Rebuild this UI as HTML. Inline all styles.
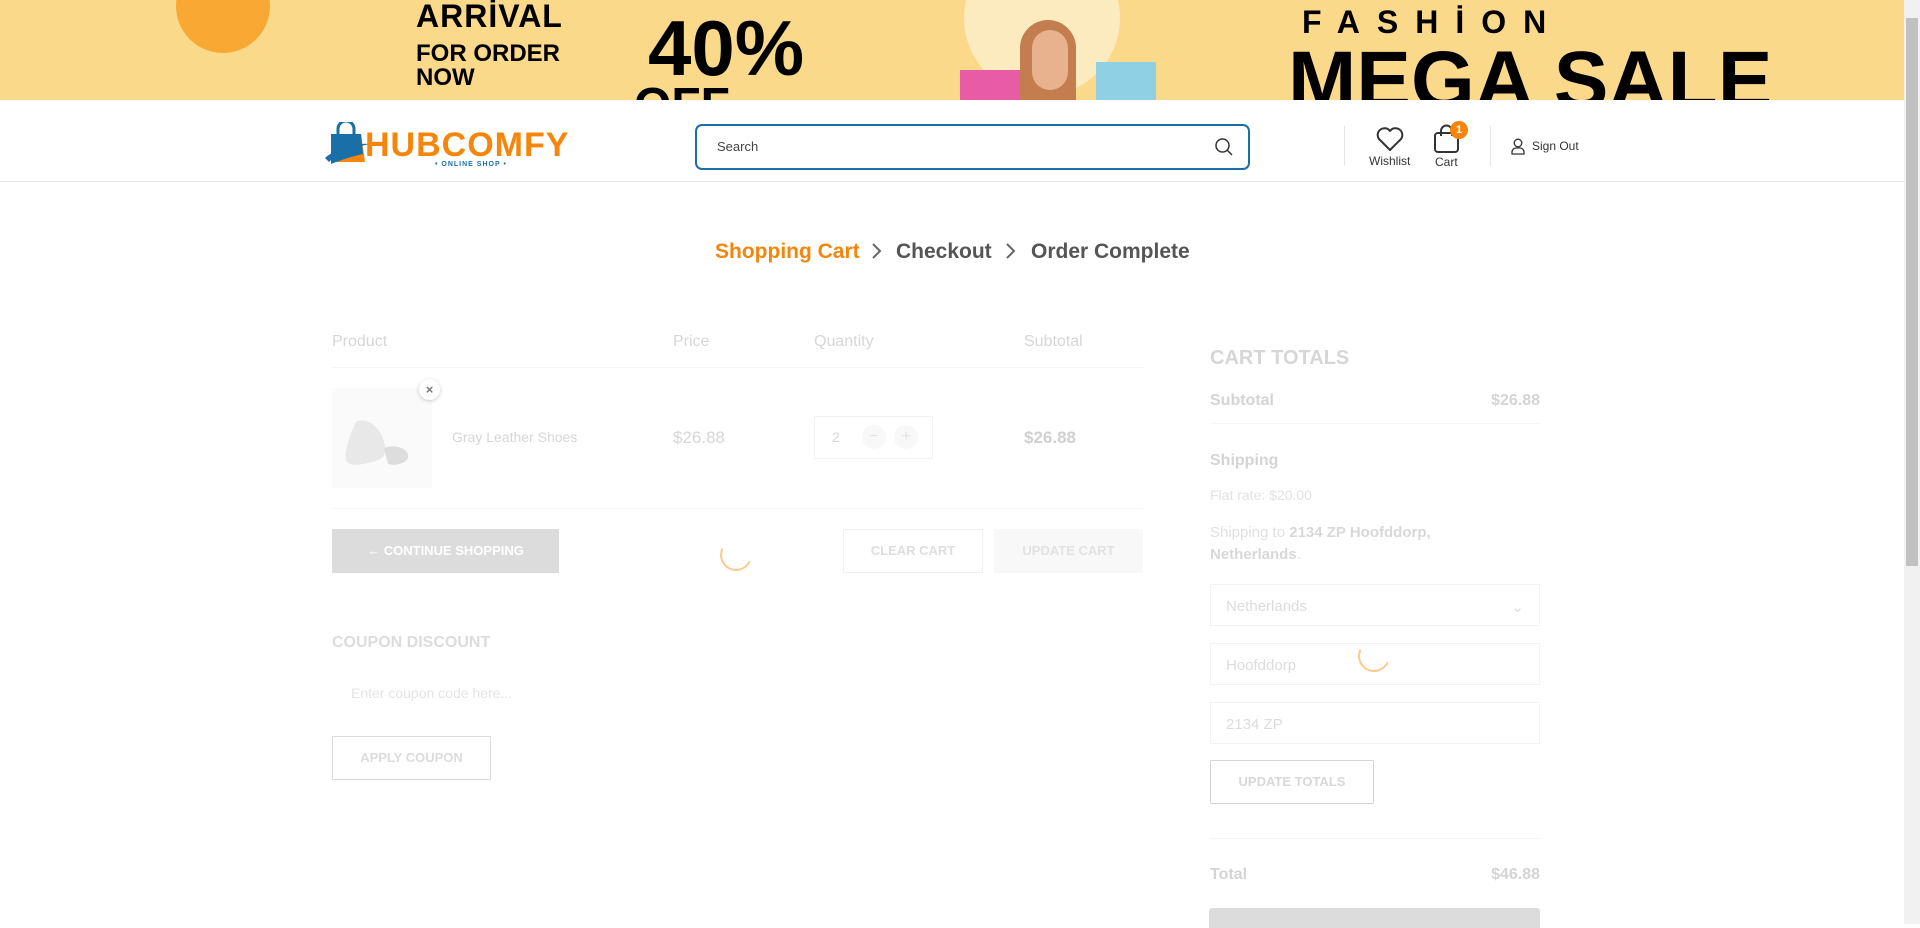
<!DOCTYPE html>
<html><head><meta charset="utf-8"><style>
*{margin:0;padding:0;box-sizing:border-box}
body{width:1920px;height:924px;overflow:hidden;background:#fff;font-family:"Liberation Sans",sans-serif;position:relative}
.a{position:absolute}
.banner{left:0;top:0;width:1904px;height:100px;background:#fbd98a;overflow:hidden}
.hd{left:0;top:100px;width:1904px;height:82px;border-bottom:1px solid #e6e6e6;background:#fff}
.g{color:#d6d6d6}
.inp{border:1px solid #f3f3f3;height:42px;width:330px;left:1210px;font-size:15px;color:#dcdcdc;padding:13px 15px}
.sb{left:1904px;top:0;width:16px;height:924px;background:#f1f1f1}
</style></head><body>
<div class="a banner">
 <div class="a" style="left:176px;top:-41px;width:94px;height:94px;border-radius:50%;background:#f9a933"></div>
 <div class="a" style="left:964px;top:-60px;width:156px;height:156px;border-radius:50%;background:#fdebc0"></div>
 <div class="a" style="left:416px;top:-2px;font-size:32px;font-weight:900;color:#000;letter-spacing:1px">ARRİVAL</div>
 <div class="a" style="left:416px;top:42px;font-size:24px;font-weight:700;color:#000;line-height:24px">FOR ORDER<br>NOW</div>
 <div class="a" style="left:648px;top:6px;font-size:78px;font-weight:900;color:#000;line-height:84px">40%</div>
 <div class="a" style="left:634px;top:82px;font-size:48px;font-weight:900;color:#000;line-height:48px">OFF</div>
 <div class="a" style="left:1020px;top:20px;width:56px;height:80px;border-radius:28px 28px 0 0;background:#c47d4e"></div>
 <div class="a" style="left:1032px;top:30px;width:36px;height:60px;border-radius:18px;background:#e8b28e"></div>
 <div class="a" style="left:960px;top:70px;width:60px;height:30px;background:#e85ca6"></div>
 <div class="a" style="left:1096px;top:62px;width:60px;height:38px;background:#8fd0e4"></div>
 <div class="a" style="left:1302px;top:4px;font-size:32px;font-weight:700;color:#000;letter-spacing:17px">FASHİON</div>
 <div class="a" style="left:1288px;top:40px;font-size:82px;font-weight:900;color:#000;line-height:82px;transform:scaleX(1.0);transform-origin:left">MEGA SALE</div>
</div>
<div class="a hd">
 <svg class="a" style="left:323px;top:22px" width="50" height="46" viewBox="0 0 50 46"><path d="M10 12 h28 l4 28 h-34z" fill="#f5860b"/><path d="M8 12 h30 l2 20 c-10 2-22 6-32 10z" fill="#1a6fa8"/><path d="M15 12 v-5 a8 8 0 0 1 16 0 v5" fill="none" stroke="#1a6fa8" stroke-width="3"/><path d="M2 36 c8-8 30-16 46-14 c-14 2-32 8-42 18z" fill="#1a6fa8"/></svg>
 <div class="a" style="left:365px;top:26px;font-size:34px;font-weight:900;color:#f5860b;letter-spacing:1px">HUBCOMFY</div>
 <div class="a" style="left:435px;top:61px;font-size:7px;font-weight:700;color:#1a6fa8;letter-spacing:1px">• ONLINE SHOP •</div>
 <div class="a" style="left:695px;top:24px;width:555px;height:46px;border:2px solid #1a6fa8;border-radius:7px"></div>
 <div class="a" style="left:717px;top:39px;font-size:13px;color:#444">Search</div>
 <svg class="a" style="left:1214px;top:37px" width="20" height="20" viewBox="0 0 20 20"><circle cx="8.5" cy="8.5" r="6.5" fill="none" stroke="#333" stroke-width="1.5"/><path d="M13.5 13.5 L18 18" stroke="#333" stroke-width="1.5"/></svg>
 <div class="a" style="left:1344px;top:26px;width:1px;height:40px;background:#e5e5e5"></div>
 <svg class="a" style="left:1375px;top:26px" width="30" height="26" viewBox="0 0 30 26"><path d="M15 24 L4 13 A6.5 6.5 0 0 1 15 5 A6.5 6.5 0 0 1 26 13 Z" fill="none" stroke="#333" stroke-width="2" stroke-linejoin="round"/></svg>
 <div class="a" style="left:1369px;top:54px;font-size:12px;color:#333">Wishlist</div>
 <svg class="a" style="left:1433px;top:24px" width="28" height="30" viewBox="0 0 28 30"><rect x="2" y="9" width="23" height="19" rx="3" fill="none" stroke="#333" stroke-width="2"/><path d="M8 12 V7 a5.5 5.5 0 0 1 11 0 V12" fill="none" stroke="#333" stroke-width="2"/></svg>
 <div class="a" style="left:1450px;top:21px;width:18px;height:18px;border-radius:50%;background:#f5860b;color:#fff;font-size:11px;font-weight:700;text-align:center;line-height:18px">1</div>
 <div class="a" style="left:1435px;top:55px;font-size:12px;color:#333">Cart</div>
 <div class="a" style="left:1490px;top:26px;width:1px;height:40px;background:#e5e5e5"></div>
 <svg class="a" style="left:1510px;top:38px" width="16" height="17" viewBox="0 0 16 17"><circle cx="8" cy="5" r="3.8" fill="none" stroke="#333" stroke-width="1.3"/><path d="M2 16 v-2 a4 4 0 0 1 4-4 h4 a4 4 0 0 1 4 4 v2z" fill="none" stroke="#333" stroke-width="1.3"/></svg>
 <div class="a" style="left:1532px;top:39px;font-size:12px;color:#333">Sign Out</div>
</div>
<div class="a" style="left:715px;top:240px;font-size:21px;font-weight:700;color:#f5860b">Shopping Cart</div>
<svg class="a" style="left:870px;top:242px" width="12" height="18" viewBox="0 0 12 18"><path d="M3 2 L10 9 L3 16" fill="none" stroke="#666" stroke-width="2"/></svg>
<div class="a" style="left:896px;top:240px;font-size:21px;font-weight:700;color:#555">Checkout</div>
<svg class="a" style="left:1004px;top:242px" width="12" height="18" viewBox="0 0 12 18"><path d="M3 2 L10 9 L3 16" fill="none" stroke="#666" stroke-width="2"/></svg>
<div class="a" style="left:1031px;top:240px;font-size:21px;font-weight:700;color:#555">Order Complete</div>

<div class="a g" style="left:332px;top:333px;font-size:16px">Product</div>
<div class="a g" style="left:673px;top:333px;font-size:16px">Price</div>
<div class="a g" style="left:814px;top:333px;font-size:16px">Quantity</div>
<div class="a g" style="left:1024px;top:333px;font-size:16px">Subtotal</div>
<div class="a" style="left:332px;top:367px;width:811px;height:1px;background:#f6f6f6"></div>
<div class="a" style="left:332px;top:388px;width:100px;height:100px;background:#fafafa"></div>
<svg class="a" style="left:342px;top:412px" width="80" height="60" viewBox="0 0 80 60"><path d="M14 10 c8 -6 22 4 26 14 c4 10 6 20 -4 24 c-10 4 -30 8 -32 0 c-2-8 4-26 10-38z" fill="#e8e8e8"/><path d="M42 36 c10 -4 24 0 24 8 c0 8 -14 10 -20 8 z" fill="#ddd"/></svg>
<div class="a" style="left:419px;top:379px;width:21px;height:21px;border-radius:50%;background:#fff;box-shadow:0 1px 4px rgba(0,0,0,.2);text-align:center;font-size:13px;line-height:21px;color:#777;font-weight:700">×</div>
<div class="a g" style="left:452px;top:429px;font-size:14px">Gray Leather Shoes</div>
<div class="a g" style="left:673px;top:428px;font-size:17px">$26.88</div>
<div class="a" style="left:814px;top:416px;width:119px;height:43px;border:1px solid #f2f2f2"></div>
<div class="a g" style="left:832px;top:429px;font-size:14px">2</div>
<div class="a" style="left:862px;top:425px;width:24px;height:24px;border-radius:50%;background:#f8f8f8;color:#e4e4e4;text-align:center;line-height:24px">−</div>
<div class="a" style="left:894px;top:425px;width:24px;height:24px;border-radius:50%;background:#f8f8f8;color:#e4e4e4;text-align:center;line-height:24px">+</div>
<div class="a" style="left:1024px;top:428px;font-size:17px;font-weight:700;color:#d0d0d0">$26.88</div>
<div class="a" style="left:332px;top:508px;width:811px;height:1px;background:#f6f6f6"></div>
<div class="a" style="left:332px;top:529px;width:227px;height:44px;background:#dcdcdc;color:#fff;font-size:13px;font-weight:700;text-align:center;line-height:44px">← CONTINUE SHOPPING</div>
<div class="a" style="left:720px;top:539px;width:32px;height:32px;border-radius:50%;border:2px solid transparent;border-left-color:#fbc98c;border-bottom-color:#fbc98c;transform:rotate(-20deg)"></div>
<div class="a" style="left:843px;top:529px;width:140px;height:44px;border:1px solid #f0f0f0;color:#dedede;font-size:13px;font-weight:700;text-align:center;line-height:42px">CLEAR CART</div>
<div class="a" style="left:994px;top:529px;width:149px;height:44px;background:#f8f8f8;color:#e2e2e2;font-size:13px;font-weight:700;text-align:center;line-height:44px">UPDATE CART</div>
<div class="a" style="left:332px;top:634px;font-size:16px;font-weight:700;color:#dcdcdc">COUPON DISCOUNT</div>
<div class="a" style="left:351px;top:685px;font-size:14px;color:#e4e4e4">Enter coupon code here...</div>
<div class="a" style="left:332px;top:736px;width:159px;height:44px;border:1px solid #dcdcdc;color:#dcdcdc;font-size:13px;font-weight:700;text-align:center;line-height:42px">APPLY COUPON</div>

<div class="a" style="left:1210px;top:347px;font-size:20px;font-weight:700;color:#d6d6d6">CART TOTALS</div>
<div class="a" style="left:1210px;top:392px;font-size:16px;font-weight:700;color:#d4d4d4">Subtotal</div>
<div class="a" style="left:1440px;top:392px;width:100px;text-align:right;font-size:16px;font-weight:700;color:#d4d4d4">$26.88</div>
<div class="a" style="left:1210px;top:423px;width:330px;height:1px;background:#f6f6f6"></div>
<div class="a" style="left:1210px;top:452px;font-size:16px;font-weight:700;color:#d4d4d4">Shipping</div>
<div class="a" style="left:1210px;top:487px;font-size:14px;color:#e2e2e2">Flat rate: $20.00</div>
<div class="a" style="left:1210px;top:522px;font-size:15px;color:#e0e0e0;line-height:22px;width:330px">Shipping to <b style="color:#d8d8d8">2134 ZP Hoofddorp,<br>Netherlands</b>.</div>
<div class="a inp" style="top:584px">Netherlands<span style="float:right">⌄</span></div>
<div class="a inp" style="top:643px">Hoofddorp</div>
<div class="a" style="left:1358px;top:640px;width:32px;height:32px;border-radius:50%;border:2px solid transparent;border-left-color:#fbc98c;border-bottom-color:#fbc98c;transform:rotate(-20deg)"></div>
<div class="a inp" style="top:702px">2134 ZP</div>
<div class="a" style="left:1210px;top:760px;width:164px;height:44px;border:1px solid #d4d4d4;border-radius:2px;color:#d8d8d8;font-size:13px;font-weight:700;text-align:center;line-height:42px">UPDATE TOTALS</div>
<div class="a" style="left:1210px;top:838px;width:330px;height:1px;background:#f6f6f6"></div>
<div class="a" style="left:1210px;top:866px;font-size:16px;font-weight:700;color:#d4d4d4">Total</div>
<div class="a" style="left:1440px;top:866px;width:100px;text-align:right;font-size:16px;font-weight:700;color:#d4d4d4">$46.88</div>
<div class="a" style="left:1209px;top:908px;width:331px;height:20px;background:#dcdcdc;border-radius:3px 3px 0 0"></div>
<div class="a sb"><div class="a" style="left:2px;top:18px;width:12px;height:548px;background:#c1c1c1"></div></div>
</body></html>
